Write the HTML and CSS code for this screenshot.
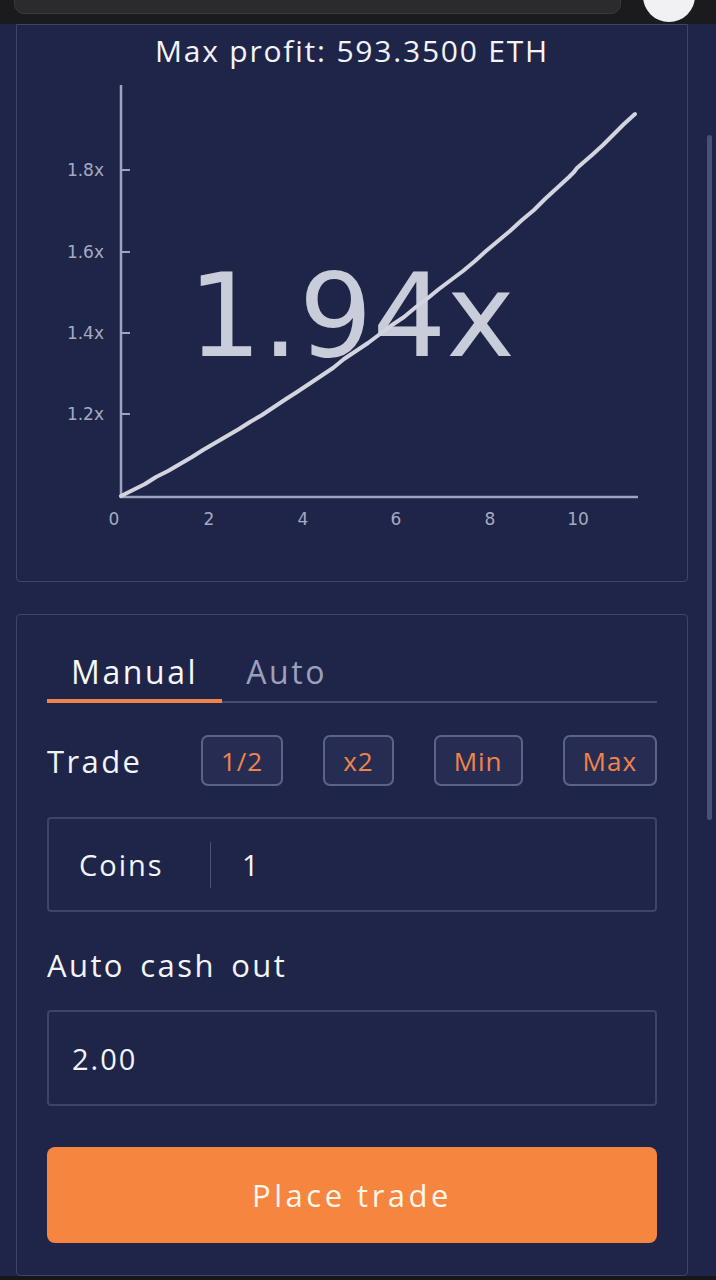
FILE: index.html
```html
<!DOCTYPE html>
<html>
  <head>
    <title>Crash Trade</title>
    <link rel="stylesheet" href="styles.css">
  </head>
  <body>
    <div class="topbar">
      <div class="urlbar"></div>
      <div class="avatar"></div>
    </div>

    <main class="page">
      <section class="card chart-card">
        <p class="max-profit">Max profit: 593.3500 ETH</p>
        <svg class="chart" width="670" height="509" viewBox="17 72 670 509">
          <!-- axes -->
          <g stroke="#9ea3bf" stroke-width="2.5" fill="none">
            <line x1="121" y1="85" x2="121" y2="497" />
            <line x1="120" y1="497" x2="638" y2="497" />
          </g>
          <g stroke="#9ea3bf" stroke-width="2">
            <line x1="121" y1="170" x2="130" y2="170" />
            <line x1="121" y1="252" x2="130" y2="252" />
            <line x1="121" y1="333" x2="130" y2="333" />
            <line x1="121" y1="414" x2="130" y2="414" />
          </g>
          <g class="tick" text-anchor="end">
            <text x="104" y="176">1.8x</text>
            <text x="104" y="258">1.6x</text>
            <text x="104" y="339">1.4x</text>
            <text x="104" y="420">1.2x</text>
          </g>
          <g class="tick" text-anchor="middle">
            <text x="114" y="525">0</text>
            <text x="209" y="525">2</text>
            <text x="303" y="525">4</text>
            <text x="396" y="525">6</text>
            <text x="490" y="525">8</text>
            <text x="578" y="525">10</text>
          </g>
          <text class="multiplier" x="188" y="356">1.94x</text>
          <polyline class="curve" points="121,496 133,490 145,484 156,477 168,471 180,464 192,457 203,450 215,443 227,436 239,429 250,422 262,415 274,407 286,399 297,392 309,384 321,376 333,368 344,359 356,351 368,343 380,334 392,325 404,317 416,307 428,298 439,289 451,280 463,271 475,261 486,251 498,241 510,231 522,220 534,210 545,199 557,188 569,177 574,172 577,168 592,155 603,145 613,135 624,124 635,114" />
        </svg>
      </section>

      <section class="card trade-card">
        <div class="tabs">
          <button class="tab active">Manual</button>
          <button class="tab">Auto</button>
        </div>

        <div class="trade-row">
          <span class="label">Trade</span>
          <div class="quick">
            <button class="quick-btn">1/2</button>
            <button class="quick-btn">x2</button>
            <button class="quick-btn">Min</button>
            <button class="quick-btn">Max</button>
          </div>
        </div>

        <div class="field coins">
          <span class="field-label">Coins</span>
          <span class="field-value">1</span>
        </div>

        <p class="label cash-label">Auto cash out</p>
        <div class="field">
          <span class="field-value cash-value">2.00</span>
        </div>

        <button class="place">Place trade</button>
      </section>
    </main>

    <div class="bottombar"></div>
    <div class="scroll-thumb"></div>
  </body>
</html>
```

FILE: styles.css
```css
*,
*::before,
*::after {
  margin: 0;
  padding: 0;
  box-sizing: border-box;
}

html,
body {
  height: 1280px;
  overflow: hidden;
}

body {
  font-family: "Open Sans", Arial, sans-serif;
  background-color: #1f2549;
  color: #f3f4f8;
  position: relative;
}

.topbar {
  height: 24px;
  background-color: #1b1b1d;
  display: flex;
  align-items: flex-start;
  padding-left: 14px;
  overflow: hidden;
}

.urlbar {
  width: 607px;
  height: 40px;
  margin-top: -26px;
  background-color: #2b2b2e;
  border: 1px solid #3a3a3e;
  border-radius: 10px;
}

.avatar {
  width: 52px;
  height: 52px;
  margin-top: -30px;
  margin-left: 22px;
  border-radius: 50%;
  background-color: #f1f1f3;
}

.page {
  display: flex;
  flex-direction: column;
  gap: 32px;
  padding: 0 28px 0 16px;
}

.card {
  border: 1px solid #3e4569;
  border-radius: 4px;
}

.chart-card {
  border-top-left-radius: 0;
  border-top-right-radius: 0;
}

.max-profit {
  margin-top: 8px;
  font-size: 30px;
  line-height: 36px;
  letter-spacing: 1.8px;
  text-align: center;
}

.chart {
  display: block;
  margin-top: 3px;
}

.tick {
  font-family: "DejaVu Sans", sans-serif;
  font-size: 17px;
  fill: #a6aac1;
}

.multiplier {
  font-family: "DejaVu Sans", sans-serif;
  font-size: 116px;
  fill: #c9ccd9;
}

.curve {
  fill: none;
  stroke: #d2d4de;
  stroke-width: 4;
  stroke-linejoin: round;
  stroke-linecap: round;
}

.trade-card {
  padding: 25px 30px 32px;
}

.tabs {
  display: flex;
  border-bottom: 2px solid #454c70;
}

.tab {
  font-family: inherit;
  background: none;
  border: none;
  border-bottom: 4px solid transparent;
  margin-bottom: -2px;
  padding: 12px 24px 7px;
  font-size: 32px;
  line-height: 40px;
  letter-spacing: 2.6px;
  color: #9ba1bd;
}

.tab.active {
  color: #f6f7fa;
  border-bottom-color: #f1834a;
}

.trade-row {
  margin-top: 32px;
  display: flex;
  align-items: center;
}

.label {
  font-size: 31px;
  line-height: 36px;
  letter-spacing: 2.4px;
}

.quick {
  margin-left: auto;
  display: flex;
  gap: 40px;
}

.quick-btn {
  font-family: inherit;
  height: 51px;
  padding: 0 18px;
  background-color: #272d52;
  border: 2px solid #5c6388;
  border-radius: 7px;
  color: #f0844b;
  font-size: 26px;
  letter-spacing: 1px;
}

.field {
  height: 95px;
  border: 2px solid #3d4468;
  border-radius: 4px;
  display: flex;
  align-items: center;
}

.coins {
  margin-top: 31px;
}

.field-label {
  width: 162px;
  padding-left: 30px;
  border-right: 1px solid #4a5175;
  font-size: 29px;
  line-height: 46px;
  letter-spacing: 2px;
}

.field-value {
  padding-left: 31px;
  font-size: 29px;
  letter-spacing: 2px;
}

.cash-label {
  margin-top: 35px;
  word-spacing: 5px;
}

.field .cash-value {
  padding-left: 23px;
}

.field:last-of-type {
  margin-top: 27px;
  height: 96px;
}

.place {
  font-family: inherit;
  display: block;
  width: 100%;
  height: 96px;
  margin-top: 41px;
  background-color: #f5853f;
  border: none;
  border-radius: 8px;
  color: #fff6ee;
  font-size: 31px;
  letter-spacing: 3.5px;
}

.bottombar {
  height: 20px;
  background-color: #17171a;
}

.scroll-thumb {
  position: absolute;
  left: 707px;
  top: 135px;
  width: 5px;
  height: 685px;
  border-radius: 3px;
  background-color: #4a5175;
}
```
